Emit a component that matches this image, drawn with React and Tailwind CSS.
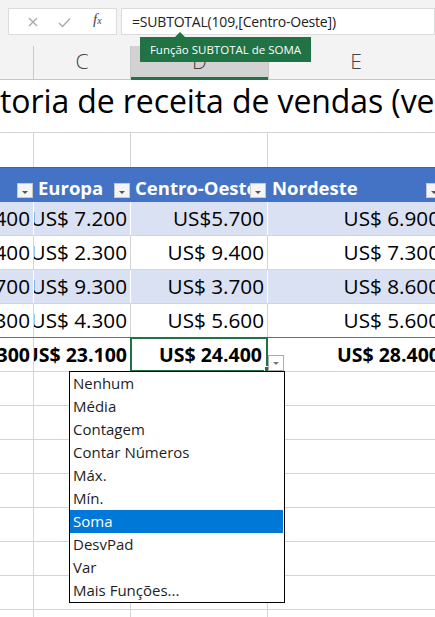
import React from "react";

const W = ["w-[34px]", "w-[97px]", "w-[137px]", "w-[175px]"];

function FilterBtn() {
  return (
    <div className="w-[16px] h-[15px] bg-[#f4f4f4] border border-[#c8c8c8] flex items-end justify-center pb-[3px] shrink-0">
      <div className="w-0 h-0 border-l-[3px] border-r-[3px] border-t-[3px] border-l-transparent border-r-transparent border-t-[#555]" />
    </div>
  );
}

const rows = [
  { v: ["US$ 5.400", "US$ 7.200", "US$5.700", "US$ 6.900"], band: true },
  { v: ["US$ 2.400", "US$ 2.300", "US$ 9.400", "US$ 7.300"], band: false },
  { v: ["US$ 3.700", "US$ 9.300", "US$ 3.700", "US$ 8.600"], band: true },
  { v: ["US$ 6.300", "US$ 4.300", "US$ 5.600", "US$ 5.600"], band: false, last: true },
];

const menu = [
  "Nenhum",
  "Média",
  "Contagem",
  "Contar Números",
  "Máx.",
  "Mín.",
  "Soma",
  "DesvPad",
  "Var",
  "Mais Funções...",
];

export default function App() {
  return (
    <div className="relative w-[435px] h-[617px] overflow-hidden bg-white font-['Open_Sans',sans-serif] text-black">
      {/* formula bar */}
      <div className="h-[46px] bg-[#f3f3f3] flex items-start pt-[8px] pl-[8px] gap-[4px]">
        <div className="w-[109px] h-[27px] bg-white border border-[#dcdcdc] flex items-center relative">
          <svg className="absolute left-[19px] top-[8px]" width="10" height="10" viewBox="0 0 10 10">
            <path d="M1 1 L9 9 M9 1 L1 9" stroke="#a8a8a8" strokeWidth="1.3" fill="none" />
          </svg>
          <svg className="absolute left-[49px] top-[8px]" width="13" height="11" viewBox="0 0 13 11">
            <path d="M1 6 L4.5 9.5 L12 1.5" stroke="#a8a8a8" strokeWidth="1.3" fill="none" />
          </svg>
          <span className="absolute left-[84px] top-[3px] font-['Liberation_Serif',serif] italic text-[15px] text-[#444] leading-none">
            f<span className="text-[10px]">x</span>
          </span>
        </div>
        <div className="flex-1 h-[27px] bg-white border border-[#dcdcdc] pl-[10px] flex items-center text-[14px] text-[#222] whitespace-nowrap tracking-[-0.2px]">
          =SUBTOTAL(109,[Centro-Oeste])
        </div>
      </div>

      {/* column headers */}
      <div className="flex h-[34px] bg-[#f3f3f3] text-[21px] font-light text-[#444] leading-none">
        <div className={`${W[0]} h-full border-r border-b border-r-[#c8c8c8] border-b-[#c6c6c6] shrink-0`} />
        <div className={`${W[1]} h-full border-r border-b border-r-[#c8c8c8] border-b-[#c6c6c6] shrink-0 flex items-center justify-center pb-[2px]`}>C</div>
        <div className={`${W[2]} h-full bg-[#d2d2d2] border-b-[3px] border-b-[#217346] shrink-0 flex items-center justify-center`}>D</div>
        <div className={`${W[3]} h-full border-l border-b border-l-[#c8c8c8] border-b-[#c6c6c6] shrink-0 flex items-center justify-center pb-[2px]`}>E</div>
      </div>

      {/* title row */}
      <div className="h-[53px] border-b border-[#d4d4d4] flex items-end pb-[15px] overflow-hidden whitespace-nowrap">
        <span className="text-[32px] leading-none tracking-[-0.1px]">toria de receita de vendas (vendas)</span>
      </div>

      {/* empty row */}
      <div className="flex h-[34px]">
        <div className={`${W[0]} border-r border-[#d4d4d4] shrink-0`} />
        <div className={`${W[1]} border-r border-[#d4d4d4] shrink-0`} />
        <div className={`${W[2]} border-r border-[#d4d4d4] shrink-0`} />
        <div className={`${W[3]} shrink-0`} />
      </div>

      {/* table header */}
      <div className="flex h-[35px] bg-[#4472c4] border-t border-[#3a62aa] text-white font-bold text-[18.5px] leading-none">
        <div className={`${W[0]} shrink-0 flex items-end justify-end pb-[4px] pr-[1px]`}>
          <FilterBtn />
        </div>
        <div className={`${W[1]} shrink-0 flex items-end justify-between pb-[4px] pr-[1px] pl-[4px] overflow-hidden`}>
          <span className="pb-[1px] whitespace-nowrap">Europa</span>
          <FilterBtn />
        </div>
        <div className={`${W[2]} shrink-0 flex items-end pb-[4px] pr-[2px] pl-[4px] overflow-hidden`}>
          <span className="pb-[1px] whitespace-nowrap overflow-hidden flex-1">Centro-Oeste</span>
          <FilterBtn />
        </div>
        <div className={`${W[3]} shrink-0 flex items-end justify-between pb-[4px] pr-[1px] pl-[4px] overflow-hidden`}>
          <span className="pb-[1px] whitespace-nowrap">Nordeste</span>
          <FilterBtn />
        </div>
      </div>

      {/* data rows */}
      {rows.map((r, i) => (
        <div
          key={i}
          className={`flex h-[34px] text-[20.7px] leading-none border-b ${r.last ? "border-b-[#4472c4]" : "border-b-[#cdd5e6]"} ${r.band ? "bg-[#d9e1f2]" : "bg-white"}`}
        >
          {r.v.map((v, j) => (
            <div
              key={j}
              className={`${W[j]} shrink-0 flex items-center justify-end pr-[3px] overflow-hidden whitespace-nowrap ${j < 3 ? (r.band ? "border-r border-r-white" : "border-r border-r-[#d4d4d4]") : ""}`}
            >
              <span className="shrink-0">{v}</span>
            </div>
          ))}
        </div>
      ))}

      {/* total row */}
      <div className="flex h-[34px] text-[19.5px] font-bold leading-none border-b border-[#d4d4d4]">
        {["US$ 18.300", "US$ 23.100", "US$ 24.400", "US$ 28.400"].map((v, j) => (
          <div
            key={j}
            className={`${W[j]} shrink-0 flex items-center justify-end ${j === 2 ? "pr-[5px]" : "pr-[3px]"} overflow-hidden whitespace-nowrap ${j < 3 ? "border-r border-r-[#d4d4d4]" : ""}`}
          >
            <span className="shrink-0">{v}</span>
          </div>
        ))}
      </div>

      {/* empty grid rows */}
      {Array.from({ length: 8 }).map((_, i) => (
        <div key={i} className="flex h-[34px] border-b border-[#d4d4d4]">
          <div className={`${W[0]} border-r border-[#d4d4d4] shrink-0`} />
          <div className={`${W[1]} border-r border-[#d4d4d4] shrink-0`} />
          <div className={`${W[2]} border-r border-[#d4d4d4] shrink-0`} />
          <div className={`${W[3]} shrink-0`} />
        </div>
      ))}

      {/* selection on total cell */}
      <div className="absolute left-[130px] top-[337px] w-[138px] h-[35px] border-2 border-[#217346] pointer-events-none" />
      <div className="absolute left-[264px] top-[366px] w-[6px] h-[6px] bg-[#217346] border border-white" />
      {/* total dropdown button */}
      <div className="absolute left-[268px] top-[355px] w-[16px] h-[16px] bg-white border border-[#ababab] flex items-center justify-center">
        <div className="w-0 h-0 border-l-[3px] border-r-[3px] border-t-[3px] border-l-transparent border-r-transparent border-t-[#777]" />
      </div>

      {/* dropdown menu */}
      <div className="absolute left-[69px] top-[371px] w-[216px] bg-white border border-black pr-[1px]">
        {menu.map((m) => (
          <div
            key={m}
            className={`h-[23px] leading-[23px] pl-[3px] text-[15px] whitespace-nowrap ${m === "Soma" ? "bg-[#0078d7] text-white" : "text-[#1e1e1e]"}`}
          >
            {m}
          </div>
        ))}
      </div>

      {/* tooltip */}
      <div className="absolute left-[175px] top-[32px] w-0 h-0 border-l-[5px] border-r-[5px] border-b-[5px] border-l-transparent border-r-transparent border-b-[#217346]" />
      <div className="absolute left-[140px] top-[37px] w-[171px] h-[25px] bg-[#217346] text-white text-[11.5px] flex items-center justify-center whitespace-nowrap">
        Função SUBTOTAL de SOMA
      </div>
    </div>
  );
}
